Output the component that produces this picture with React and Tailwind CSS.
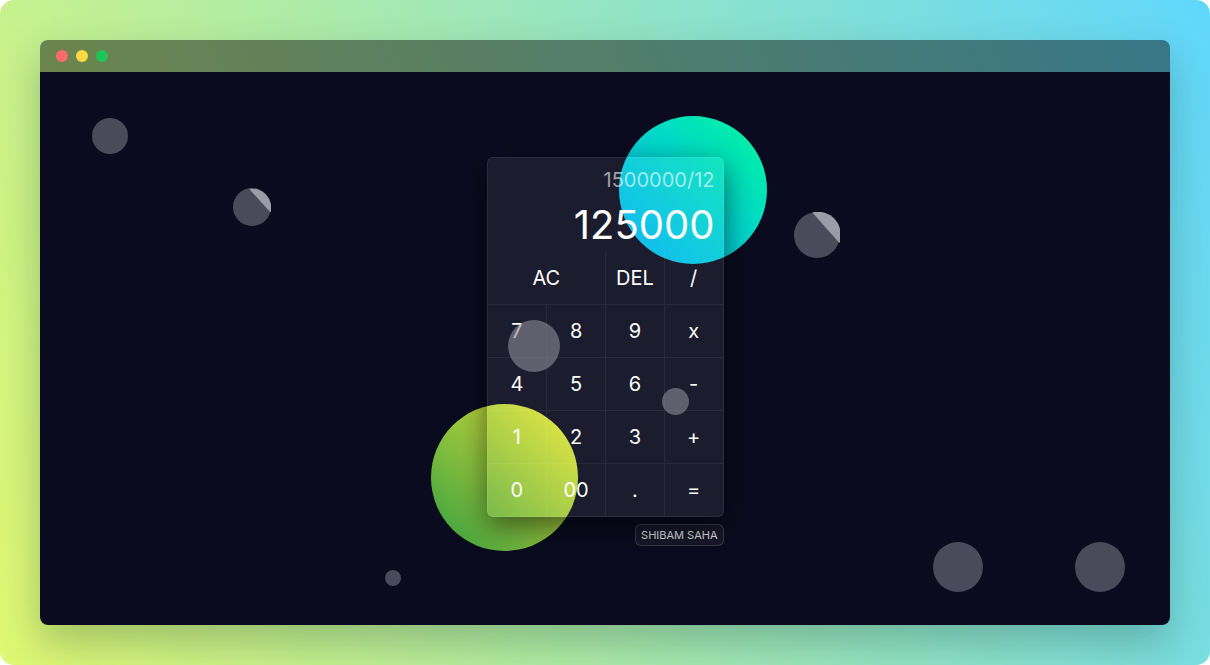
import React from 'react';

const keys = [
  { label: 'AC', span: true },
  { label: 'DEL' },
  { label: '/' },
  { label: '7' },
  { label: '8' },
  { label: '9' },
  { label: 'x' },
  { label: '4' },
  { label: '5' },
  { label: '6' },
  { label: '-' },
  { label: '1' },
  { label: '2' },
  { label: '3' },
  { label: '+' },
  { label: '0' },
  { label: '00' },
  { label: '.' },
  { label: '=' },
];

function Dot({ className }) {
  return <div className={`absolute rounded-full bg-[#4a4a5b] ${className}`} />;
}

function Calculator() {
  let col = 0;
  return (
    <div className="relative z-10 w-[237px] overflow-hidden rounded-md border border-white/[0.08] bg-white/[0.07] shadow-[0_10px_30px_rgba(0,0,0,0.55)]">
      <div className="flex h-[93px] flex-col items-end px-2 pt-2 text-right">
        <div className="text-[20px] leading-[28px] text-white/60">1500000/12</div>
        <div className="mt-[6px] text-[40px] leading-[50px] text-white">125000</div>
      </div>
      <div className="grid grid-cols-4">
        {keys.map((k, i) => {
          const first = col === 0;
          col = (col + (k.span ? 2 : 1)) % 4;
          return (
            <button
              key={k.label}
              className={`flex h-[53px] items-center justify-center border-white/[0.06] text-[20px] text-white ${
                k.span ? 'col-span-2' : ''
              } ${first ? '' : 'border-l'} ${i < 3 ? '' : 'border-t'}`}
            >
              {k.label}
            </button>
          );
        })}
      </div>
    </div>
  );
}

export default function App() {
  return (
    <div className="h-[665px] w-[1210px] bg-white" style={{ fontFamily: 'Inter, "Noto Sans", sans-serif' }}>
      <div className="flex h-full w-full rounded-[14px] bg-linear-[66deg] from-[#e0f872] to-[#60d7fc] p-10">
        <div className="flex w-full flex-col overflow-hidden rounded-lg shadow-[0_18px_40px_rgba(0,40,30,0.25)]">
          <div className="flex h-8 shrink-0 items-center gap-2 bg-black/45 px-4">
            <span className="h-3 w-3 rounded-full bg-[#fe6b6b]" />
            <span className="h-3 w-3 rounded-full bg-[#fdd940]" />
            <span className="h-3 w-3 rounded-full bg-[#1ec45a]" />
          </div>
          <div className="relative flex flex-1 items-center justify-center bg-[#0a0b1e] pt-[6px]">
            <Dot className="left-[52px] top-[46px] h-9 w-9" />
            <svg className="absolute left-[193px] top-[116px]" width="38" height="38" viewBox="0 0 38 38">
              <circle cx="19" cy="19" r="19" fill="#4a4a5b" />
              <path d="M16.3 1 A19 19 0 0 1 37.6 24.5 Z" fill="#9c9ca8" />
            </svg>
            <svg className="absolute left-[754px] top-[140px]" width="46" height="46" viewBox="0 0 46 46">
              <circle cx="23" cy="23" r="23" fill="#4a4a5b" />
              <path d="M18.3 0.5 A23 23 0 0 1 45.4 31 Z" fill="#9c9ca8" />
            </svg>
            <Dot className="left-[345px] top-[498px] h-4 w-4" />
            <Dot className="left-[893px] top-[470px] h-[50px] w-[50px]" />
            <Dot className="left-[1035px] top-[470px] h-[50px] w-[50px]" />

            <div className="absolute left-[579px] top-[44px] h-[148px] w-[148px] rounded-full bg-linear-to-tr from-[#14aef6] to-[#00f799]" />
            <div className="absolute left-[391px] top-[332px] h-[147px] w-[147px] rounded-full bg-linear-to-tr from-[#1a9e3e] to-[#ecea32]" />

            <div className="flex flex-col items-end gap-[7px]">
              <Calculator />
              <div className="rounded-md border border-white/15 bg-white/[0.05] px-[5px] py-[3px] text-[11px] leading-[14px] text-white/85">
                SHIBAM SAHA
              </div>
            </div>

            <div className="absolute left-[468px] top-[248px] z-20 h-[52px] w-[52px] rounded-full bg-[#8d8c98]/60" />
            <div className="absolute left-[622px] top-[316px] z-20 h-[27px] w-[27px] rounded-full bg-[#8d8c98]/60" />
          </div>
        </div>
      </div>
    </div>
  );
}
